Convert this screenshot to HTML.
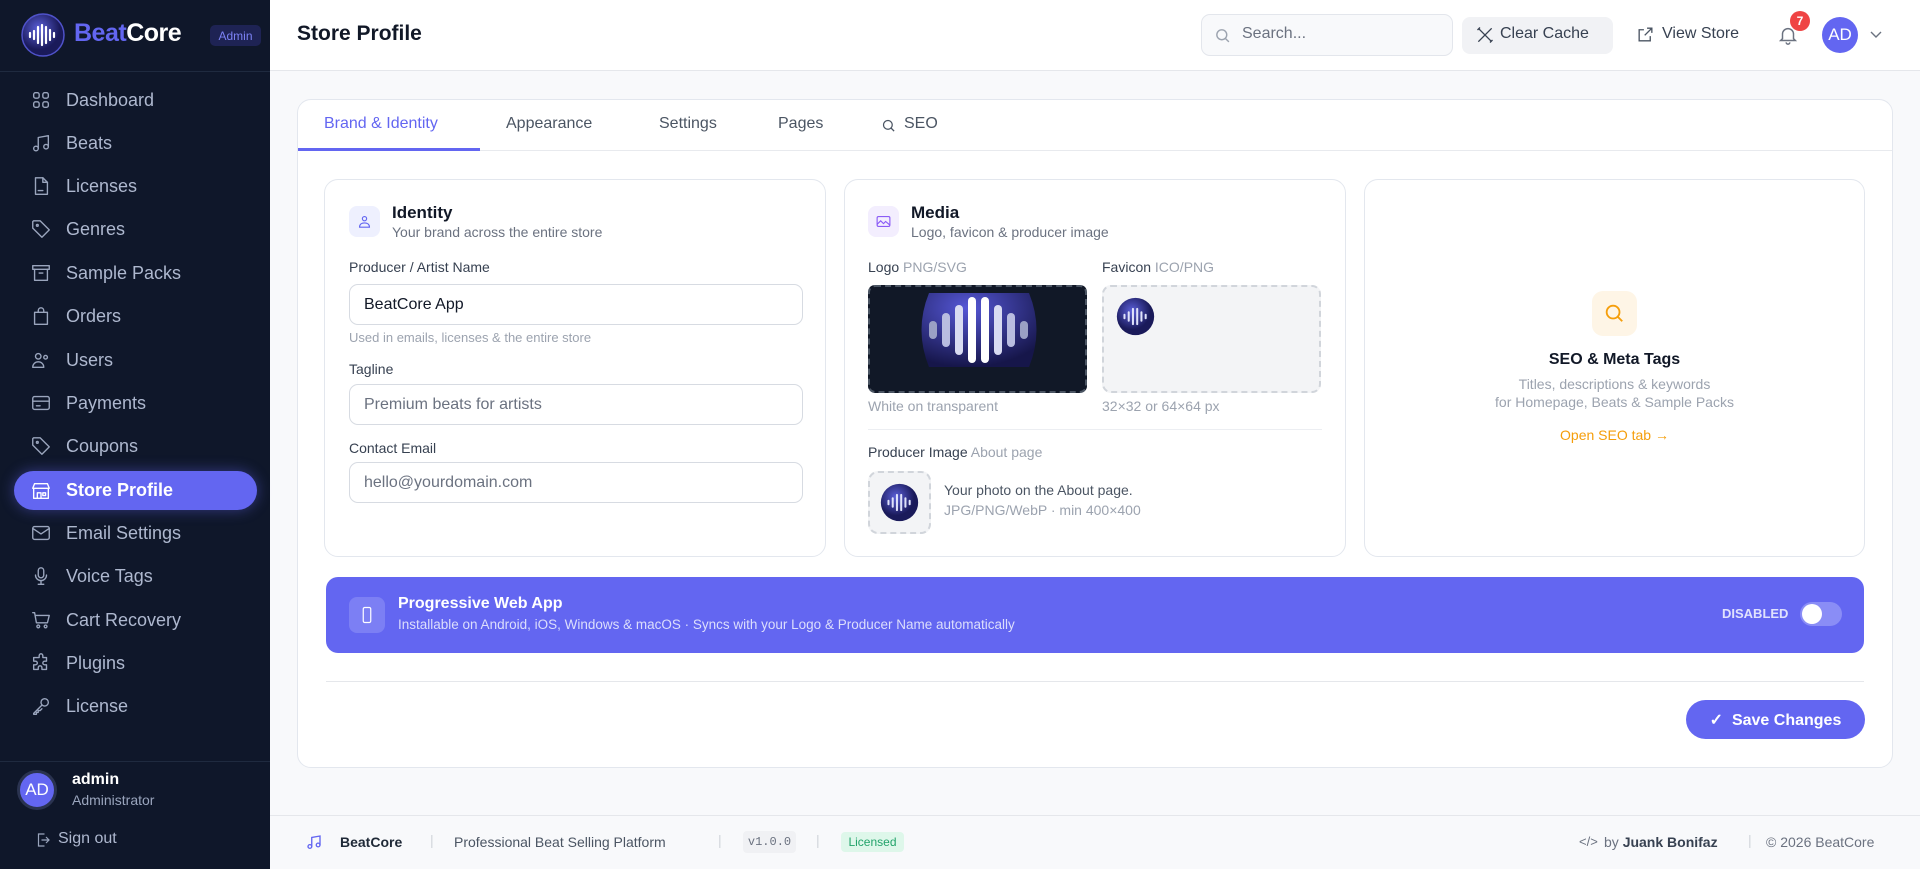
<!DOCTYPE html>
<html><head><meta charset="utf-8"><style>
*{box-sizing:border-box;margin:0;padding:0}
body{width:1920px;height:869px;overflow:hidden;font-family:"Liberation Sans",sans-serif;background:#f8f9fb;position:relative;color:#111827}
.a{position:absolute}
.sb{left:0;top:0;width:270px;height:869px;background:#0f172a}
.nav{position:absolute;left:0;width:270px;height:40px;display:flex;align-items:center;color:#aeb8cf;font-size:18px}
.nav svg{position:absolute;left:30px;width:22px;height:22px;fill:none;stroke:#9aa5bd;stroke-width:1.5;stroke-linecap:round;stroke-linejoin:round}
.nav span{position:absolute;left:66px}
.nav.act{left:14px;width:243px;height:39px;background:#6366f1;border-radius:20px;color:#fff;font-weight:bold;box-shadow:0 0 14px rgba(99,102,241,.45)}
.nav.act svg{left:16px;stroke:#fff}
.nav.act span{left:52px}
.card{background:#fff;border:1px solid #e3e7ee;border-radius:14px}
.lbl{font-size:14px;color:#374151}
.inp{border:1px solid #d7dbe2;border-radius:9px;background:#fff;height:41px;font-size:16px;padding:0 14px;display:flex;align-items:center}
.ic svg{fill:none;stroke-linecap:round;stroke-linejoin:round}
</style></head><body>
<div class="a sb">
  <div class="a" style="left:0;top:71px;width:270px;height:1px;background:#1f2a3f"></div>
  <svg class="a" style="left:20px;top:12px" width="46" height="46" viewBox="0 0 46 46"><defs><radialGradient id="g" cx="40%" cy="35%"><stop offset="0" stop-color="#5b5fd8"/><stop offset="1" stop-color="#1a1a5a"/></radialGradient></defs><circle cx="23" cy="23" r="21" fill="url(#g)" stroke="#4f52c9" stroke-width="1.5"/><g stroke="#fff" stroke-linecap="round" stroke-width="2.2"><line x1="10" y1="21" x2="10" y2="25"/><line x1="14" y1="19" x2="14" y2="27"/><line x1="18" y1="15" x2="18" y2="31"/><line x1="22" y1="13" x2="22" y2="33"/><line x1="26" y1="15" x2="26" y2="31"/><line x1="30" y1="18" x2="30" y2="28"/><line x1="34" y1="21" x2="34" y2="25"/></g></svg>
  <div class="a" style="left:74px;top:19px;font-size:25px;font-weight:bold;letter-spacing:-.5px"><span style="color:#6366f1">Beat</span><span style="color:#fff">Core</span></div>
  <div class="a" style="left:210px;top:25px;width:51px;height:21px;border-radius:5px;background:#1e2354;color:#7c82f5;font-size:12px;display:flex;align-items:center;justify-content:center">Admin</div>

  <div class="nav" style="top:80px"><svg viewBox="0 0 24 24"><rect x="4" y="4" width="6" height="6" rx="2"/><rect x="14" y="4" width="6" height="6" rx="2"/><rect x="4" y="14" width="6" height="6" rx="2"/><rect x="14" y="14" width="6" height="6" rx="2"/></svg><span>Dashboard</span></div>
  <div class="nav" style="top:123px"><svg viewBox="0 0 24 24"><path d="M9 18V6l11-2v12"/><circle cx="6.5" cy="18" r="2.5"/><circle cx="17.5" cy="16" r="2.5"/></svg><span>Beats</span></div>
  <div class="nav" style="top:166px"><svg viewBox="0 0 24 24"><path d="M6 3h8l5 5v13H6z"/><path d="M14 3v5h5M9 17h5"/></svg><span>Licenses</span></div>
  <div class="nav" style="top:209px"><svg viewBox="0 0 24 24"><path d="M3 4v7l10 10 8-8L11 3H4z"/><circle cx="8" cy="8" r="1"/></svg><span>Genres</span></div>
  <div class="nav" style="top:253px"><svg viewBox="0 0 24 24"><rect x="3" y="4" width="18" height="4"/><path d="M5 8v12h14V8M10 12h4"/></svg><span>Sample Packs</span></div>
  <div class="nav" style="top:296px"><svg viewBox="0 0 24 24"><path d="M5 8h14v13H5z"/><path d="M9 8V6a3 3 0 016 0v2"/></svg><span>Orders</span></div>
  <div class="nav" style="top:340px"><svg viewBox="0 0 24 24"><circle cx="9" cy="8" r="3"/><path d="M3 20c0-4 3-6 6-6s6 2 6 6z"/><circle cx="17" cy="9" r="2"/></svg><span>Users</span></div>
  <div class="nav" style="top:383px"><svg viewBox="0 0 24 24"><rect x="3" y="5" width="18" height="14" rx="2"/><path d="M3 10h18M7 15h4"/></svg><span>Payments</span></div>
  <div class="nav" style="top:426px"><svg viewBox="0 0 24 24"><path d="M3 4v7l10 10 8-8L11 3H4z"/><circle cx="8" cy="8" r="1"/></svg><span>Coupons</span></div>
  <div class="nav act" style="top:471px"><svg viewBox="0 0 24 24"><path d="M3 9l2-5h14l2 5zM4 9v11h16V9M8 20v-6h4v6M14 14h3v3h-3z"/></svg><span>Store Profile</span></div>
  <div class="nav" style="top:513px"><svg viewBox="0 0 24 24"><rect x="3" y="5" width="18" height="14" rx="2"/><path d="M3 7l9 6 9-6"/></svg><span>Email Settings</span></div>
  <div class="nav" style="top:556px"><svg viewBox="0 0 24 24"><rect x="9" y="3" width="6" height="11" rx="3"/><path d="M6 11a6 6 0 0012 0M12 17v4M9 21h6"/></svg><span>Voice Tags</span></div>
  <div class="nav" style="top:600px"><svg viewBox="0 0 24 24"><path d="M3 4h2l2 11h12l2-8H6"/><circle cx="9" cy="19" r="1.5"/><circle cx="17" cy="19" r="1.5"/></svg><span>Cart Recovery</span></div>
  <div class="nav" style="top:643px"><svg viewBox="0 0 24 24"><path d="M10 4a2 2 0 014 0v2h4v4h-2a2 2 0 000 4h2v5h-5v-2a2 2 0 00-4 0v2H4v-5h2a2 2 0 000-4H4V6h6z"/></svg><span>Plugins</span></div>
  <div class="nav" style="top:686px"><svg viewBox="0 0 24 24"><circle cx="16" cy="8" r="4"/><path d="M13 11l-9 9v1h3v-2h2v-2h2l2-2"/></svg><span>License</span></div>

  <div class="a" style="left:0;top:761px;width:270px;height:1px;background:#1f2a3f"></div>
  <div class="a" style="left:17px;top:770px;width:40px;height:40px;border-radius:50%;background:#6366f1;border:3px solid #2a3350;color:#fff;font-size:17px;display:flex;align-items:center;justify-content:center">AD</div>
  <div class="a" style="left:72px;top:771px;color:#fff;font-weight:bold;font-size:16px">admin</div>
  <div class="a" style="left:72px;top:792px;color:#9aa5bd;font-size:14px">Administrator</div>
  <svg class="a" style="left:34px;top:831px" width="18" height="18" viewBox="0 0 24 24" fill="none" stroke="#9aa5bd" stroke-width="1.6"><path d="M14 4H6v16h8M10 12h10M16 8l4 4-4 4"/></svg>
  <div class="a" style="left:58px;top:830px;color:#aeb8cf;font-size:16px">Sign out</div>
</div>

<!-- topbar -->
<div class="a" style="left:270px;top:0;width:1650px;height:71px;background:#fff;border-bottom:1px solid #e5e7eb"></div>
<div class="a" style="left:297px;top:22px;font-size:21px;font-weight:bold;color:#111827">Store Profile</div>
<div class="a" style="left:1201px;top:14px;width:252px;height:42px;border:1px solid #e3e6ec;border-radius:9px;background:#f8f9fb"></div>
<svg class="a" style="left:1214px;top:27px" width="17" height="17" viewBox="0 0 24 24" fill="none" stroke="#9ca3af" stroke-width="2"><circle cx="11" cy="11" r="7"/><path d="M16 16l5 5"/></svg>
<div class="a" style="left:1242px;top:25px;font-size:16px;color:#6b7280">Search...</div>
<div class="a" style="left:1462px;top:17px;width:151px;height:37px;border-radius:8px;background:#f1f2f5"></div>
<svg class="a" style="left:1475px;top:25px" width="20" height="20" viewBox="0 0 24 24" fill="none" stroke="#374151" stroke-width="1.6"><path d="M4 4l16 16M20 4L4 20M3 6l3-3M18 21l3-3"/></svg>
<div class="a" style="left:1500px;top:25px;font-size:16px;color:#374151">Clear Cache</div>
<svg class="a" style="left:1636px;top:25px" width="19" height="19" viewBox="0 0 24 24" fill="none" stroke="#4b5563" stroke-width="1.7"><path d="M14 4h6v6M20 4l-9 9M18 14v6H4V6h6"/></svg>
<div class="a" style="left:1662px;top:25px;font-size:16px;color:#374151">View Store</div>
<svg class="a" style="left:1777px;top:24px" width="22" height="22" viewBox="0 0 24 24" fill="none" stroke="#6b7280" stroke-width="1.6"><path d="M6 16V11a6 6 0 0112 0v5l2 2H4zM10 20a2 2 0 004 0"/></svg>
<div class="a" style="left:1790px;top:11px;width:20px;height:20px;border-radius:50%;background:#ef4444;color:#fff;font-size:12px;font-weight:bold;display:flex;align-items:center;justify-content:center">7</div>
<div class="a" style="left:1822px;top:17px;width:36px;height:36px;border-radius:50%;background:#6366f1;color:#fff;font-size:17px;display:flex;align-items:center;justify-content:center">AD</div>
<svg class="a" style="left:1869px;top:30px" width="14" height="10" viewBox="0 0 14 10" fill="none" stroke="#6b7280" stroke-width="1.4"><path d="M2 2l5 5 5-5"/></svg>

<!-- main card -->
<div class="a card" style="left:297px;top:99px;width:1596px;height:669px"></div>
<div class="a" style="left:298px;top:150px;width:1594px;height:1px;background:#e8eaee"></div>
<div class="a" style="left:298px;top:148px;width:182px;height:3px;background:#6366f1"></div>
<div class="a" style="left:324px;top:115px;font-size:16px;color:#6366f1">Brand &amp; Identity</div>
<div class="a" style="left:506px;top:115px;font-size:16px;color:#4b5563">Appearance</div>
<div class="a" style="left:659px;top:115px;font-size:16px;color:#4b5563">Settings</div>
<div class="a" style="left:778px;top:115px;font-size:16px;color:#4b5563">Pages</div>
<svg class="a" style="left:881px;top:118px" width="15" height="15" viewBox="0 0 24 24" fill="none" stroke="#4b5563" stroke-width="2"><circle cx="11" cy="11" r="7"/><path d="M16 16l5 5"/></svg>
<div class="a" style="left:904px;top:115px;font-size:16px;color:#4b5563">SEO</div>

<!-- identity -->
<div class="a card" style="left:324px;top:179px;width:502px;height:378px"></div>
<div class="a" style="left:349px;top:206px;width:31px;height:31px;border-radius:8px;background:#eef0fe"></div>
<svg class="a" style="left:356px;top:213px" width="17" height="17" viewBox="0 0 24 24" fill="none" stroke="#6366f1" stroke-width="1.6"><circle cx="12" cy="8" r="3"/><path d="M5 20c0-4 3-6 7-6s7 2 7 6z"/></svg>
<div class="a" style="left:392px;top:203px;font-size:17px;font-weight:bold">Identity</div>
<div class="a" style="left:392px;top:224px;font-size:14px;color:#6b7280">Your brand across the entire store</div>
<div class="a lbl" style="left:349px;top:259px">Producer / Artist Name</div>
<div class="a inp" style="left:349px;top:284px;width:454px;color:#111827">BeatCore App</div>
<div class="a" style="left:349px;top:330px;font-size:13px;color:#9ca3af">Used in emails, licenses &amp; the entire store</div>
<div class="a lbl" style="left:349px;top:361px">Tagline</div>
<div class="a inp" style="left:349px;top:384px;width:454px;color:#6b7280">Premium beats for artists</div>
<div class="a lbl" style="left:349px;top:440px">Contact Email</div>
<div class="a inp" style="left:349px;top:462px;width:454px;color:#6b7280">hello@yourdomain.com</div>

<!-- media -->
<div class="a card" style="left:844px;top:179px;width:502px;height:378px"></div>
<div class="a" style="left:868px;top:206px;width:31px;height:31px;border-radius:8px;background:#f3eefe"></div>
<svg class="a" style="left:875px;top:213px" width="17" height="17" viewBox="0 0 24 24" fill="none" stroke="#8b5cf6" stroke-width="1.6"><rect x="3" y="5" width="18" height="14" rx="2"/><path d="M3 16l5-5 4 4 3-3 6 5"/></svg>
<div class="a" style="left:911px;top:203px;font-size:17px;font-weight:bold">Media</div>
<div class="a" style="left:911px;top:224px;font-size:14px;color:#6b7280">Logo, favicon &amp; producer image</div>
<div class="a lbl" style="left:868px;top:259px">Logo <span style="color:#9ca3af">PNG/SVG</span></div>
<div class="a lbl" style="left:1102px;top:259px">Favicon <span style="color:#9ca3af">ICO/PNG</span></div>
<div class="a" style="left:868px;top:285px;width:219px;height:108px;background:#111827;border:2px dashed #4b5563;border-radius:7px;overflow:hidden">
<svg class="a" style="left:49px;top:6px" width="120" height="74" viewBox="0 0 120 74"><defs><radialGradient id="g2" cx="40%" cy="20%" r="80%"><stop offset="0" stop-color="#5557d6"/><stop offset="1" stop-color="#16164a"/></radialGradient></defs><path d="M10 0H110Q125 37 110 74H10Q-5 37 10 0z" fill="url(#g2)"/><g stroke-linecap="round" stroke-width="8"><line x1="14" y1="32" x2="14" y2="42" stroke="#9aa0c4"/><line x1="27" y1="24" x2="27" y2="50" stroke="#b9bde0"/><line x1="40" y1="16" x2="40" y2="58" stroke="#d8dbf2"/><line x1="53" y1="8" x2="53" y2="66" stroke="#fff"/><line x1="66" y1="8" x2="66" y2="66" stroke="#fff"/><line x1="79" y1="16" x2="79" y2="58" stroke="#d8dbf2"/><line x1="92" y1="24" x2="92" y2="50" stroke="#b9bde0"/><line x1="105" y1="32" x2="105" y2="42" stroke="#9aa0c4"/></g></svg>
</div>
<div class="a" style="left:1102px;top:285px;width:219px;height:108px;background:#f3f4f6;border:2px dashed #d1d5db;border-radius:9px"></div>
<svg class="a" style="left:1116px;top:297px" width="39" height="39" viewBox="0 0 46 46"><circle cx="23" cy="23" r="22" fill="url(#g)"/><g stroke="#dfe2fa" stroke-linecap="round" stroke-width="2.4"><line x1="10" y1="21" x2="10" y2="25"/><line x1="15" y1="18" x2="15" y2="28"/><line x1="20" y1="14" x2="20" y2="32"/><line x1="25" y1="14" x2="25" y2="32"/><line x1="30" y1="18" x2="30" y2="28"/><line x1="35" y1="21" x2="35" y2="25"/></g></svg>
<div class="a" style="left:868px;top:398px;font-size:14px;color:#9ca3af">White on transparent</div>
<div class="a" style="left:1102px;top:398px;font-size:14px;color:#9ca3af">32×32 or 64×64 px</div>
<div class="a" style="left:868px;top:429px;width:454px;height:1px;background:#eceef2"></div>
<div class="a lbl" style="left:868px;top:444px">Producer Image <span style="color:#9ca3af">About page</span></div>
<div class="a" style="left:868px;top:471px;width:63px;height:63px;background:#f3f4f6;border:2px dashed #d1d5db;border-radius:10px"></div>
<svg class="a" style="left:880px;top:483px" width="39" height="39" viewBox="0 0 46 46"><circle cx="23" cy="23" r="22" fill="url(#g)"/><g stroke="#dfe2fa" stroke-linecap="round" stroke-width="2.4"><line x1="10" y1="21" x2="10" y2="25"/><line x1="15" y1="18" x2="15" y2="28"/><line x1="20" y1="14" x2="20" y2="32"/><line x1="25" y1="14" x2="25" y2="32"/><line x1="30" y1="18" x2="30" y2="28"/><line x1="35" y1="21" x2="35" y2="25"/></g></svg>
<div class="a" style="left:944px;top:482px;font-size:14px;color:#4b5563">Your photo on the About page.</div>
<div class="a" style="left:944px;top:502px;font-size:14px;color:#9ca3af">JPG/PNG/WebP · min 400×400</div>

<!-- seo -->
<div class="a card" style="left:1364px;top:179px;width:501px;height:378px"></div>
<div class="a" style="left:1592px;top:291px;width:45px;height:45px;border-radius:11px;background:#fef5e6"></div>
<svg class="a" style="left:1603px;top:302px" width="22" height="22" viewBox="0 0 24 24" fill="none" stroke="#f59e0b" stroke-width="2"><circle cx="11" cy="11" r="7"/><path d="M16 16l5 5"/></svg>
<div class="a" style="left:1364px;top:351px;width:501px;text-align:center;font-size:16px;font-weight:bold">SEO &amp; Meta Tags</div>
<div class="a" style="left:1364px;top:375px;width:501px;text-align:center;font-size:14px;color:#9ca3af;line-height:18px">Titles, descriptions &amp; keywords<br>for Homepage, Beats &amp; Sample Packs</div>
<div class="a" style="left:1364px;top:427px;width:501px;text-align:center;font-size:14px;color:#f59e0b">Open SEO tab →</div>

<!-- pwa -->
<div class="a" style="left:326px;top:577px;width:1538px;height:76px;background:#6366f1;border-radius:12px"></div>
<div class="a" style="left:349px;top:597px;width:36px;height:36px;border-radius:8px;background:#7c7ff4"></div>
<svg class="a" style="left:358px;top:605px" width="18" height="20" viewBox="0 0 24 24" fill="none" stroke="#fff" stroke-width="1.6"><rect x="7" y="2" width="10" height="20" rx="2"/></svg>
<div class="a" style="left:398px;top:595px;font-size:16px;font-weight:bold;color:#fff">Progressive Web App</div>
<div class="a" style="left:398px;top:617px;font-size:13.5px;color:#dcdefc">Installable on Android, iOS, Windows &amp; macOS · Syncs with your Logo &amp; Producer Name automatically</div>
<div class="a" style="left:1722px;top:606px;font-size:13px;font-weight:bold;color:#e0e2fd">DISABLED</div>
<div class="a" style="left:1800px;top:602px;width:42px;height:24px;border-radius:12px;background:#8a8df6"></div>
<div class="a" style="left:1802px;top:604px;width:20px;height:20px;border-radius:50%;background:#fff"></div>

<div class="a" style="left:326px;top:681px;width:1538px;height:1px;background:#e5e7eb"></div>
<div class="a" style="left:1686px;top:700px;width:179px;height:39px;border-radius:20px;background:#6366f1;color:#fff;font-size:16px;font-weight:bold;display:flex;align-items:center;justify-content:center">✓&nbsp;&nbsp;Save Changes</div>

<!-- footer -->
<div class="a" style="left:270px;top:815px;width:1650px;height:1px;background:#e5e7eb"></div>
<svg class="a" style="left:305px;top:833px" width="18" height="18" viewBox="0 0 24 24" fill="none" stroke="#6366f1" stroke-width="1.8"><path d="M9 18V6l11-2v12"/><circle cx="6.5" cy="18" r="2.5"/><circle cx="17.5" cy="16" r="2.5"/></svg>
<div class="a" style="left:340px;top:834px;font-size:14px;font-weight:bold;color:#1f2937">BeatCore</div>
<div class="a" style="left:430px;top:832px;font-size:14px;color:#d1d5db">|</div>
<div class="a" style="left:454px;top:834px;font-size:14px;color:#4b5563">Professional Beat Selling Platform</div>
<div class="a" style="left:718px;top:832px;font-size:14px;color:#d1d5db">|</div>
<div class="a" style="left:743px;top:831px;width:53px;height:22px;border-radius:4px;background:#f0f1f4;font-family:'Liberation Mono',monospace;font-size:12px;color:#6b7280;display:flex;align-items:center;justify-content:center">v1.0.0</div>
<div class="a" style="left:816px;top:832px;font-size:14px;color:#d1d5db">|</div>
<div class="a" style="left:841px;top:832px;width:63px;height:20px;border-radius:4px;background:#def7ea;font-size:12px;color:#22a36a;display:flex;align-items:center;justify-content:center">Licensed</div>
<div class="a" style="left:1579px;top:834px;font-size:13px;color:#6b7280">&lt;/&gt;</div>
<div class="a" style="left:1604px;top:834px;font-size:14px;color:#6b7280">by <b style="color:#374151">Juank Bonifaz</b></div>
<div class="a" style="left:1748px;top:832px;font-size:14px;color:#d1d5db">|</div>
<div class="a" style="left:1766px;top:834px;font-size:14px;color:#6b7280">© 2026 BeatCore</div>
</body></html>
